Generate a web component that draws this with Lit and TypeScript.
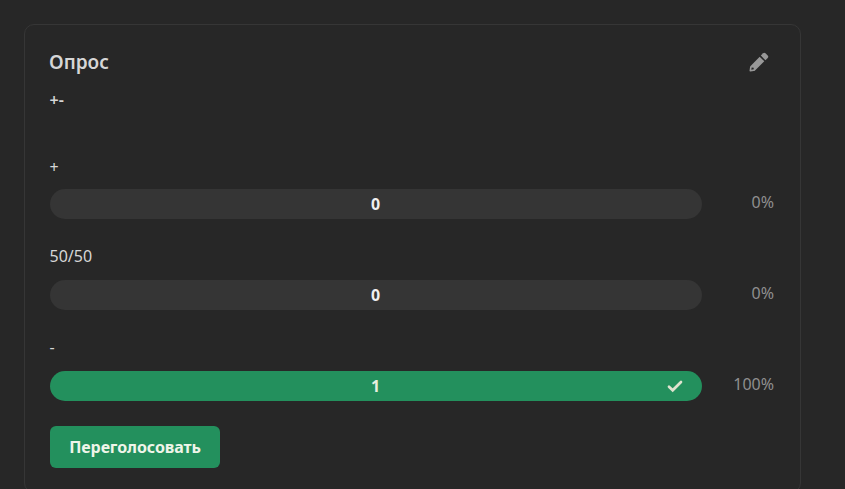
import { LitElement, html, css } from "lit";
import { customElement } from "lit/decorators.js";

interface Option {
  label: string;
  votes: number;
  percent: number;
  chosen: boolean;
}

@customElement("app-root")
class AppRoot extends LitElement {
  static styles = css`
    :host {
      display: block;
      height: 489px;
      overflow: hidden;
      box-sizing: border-box;
      padding: 24px 44px 0 24px;
      background: #272727;
      color: #d6d6d6;
      font: 400 16px/24px "Noto Sans", "Open Sans", sans-serif;
    }
    .card {
      box-sizing: border-box;
      height: 469px;
      padding: 25px;
      border: 1px solid #363636;
      border-radius: 10px;
    }
    .head {
      display: flex;
      justify-content: space-between;
      height: 24px;
    }
    .title {
      margin: 0 0 0 -1px;
      font-size: 19px;
      line-height: 24px;
      font-weight: 600;
    }
    .edit {
      width: 20px;
      height: 20px;
      margin: 2px 6px 0 0;
      fill: #989898;
    }
    .question {
      margin: 14px 0 43px -0.5px;
      font-weight: 600;
    }
    .options {
      display: grid;
      gap: 25px;
    }
    .label {
      margin: 0 0 12px -0.5px;
    }
    .option:first-child .label {
      margin-bottom: 10px;
    }
    .row {
      display: flex;
      align-items: center;
      justify-content: space-between;
      height: 30px;
    }
    .bar {
      display: grid;
      grid-template-columns: 1fr auto 1fr;
      align-items: center;
      width: 652px;
      height: 30px;
      border-radius: 15px;
      background: #353535;
      color: #f0f0f0;
      font-weight: 700;
    }
    .bar.chosen {
      background: #23905d;
      color: #e6efdf;
    }
    .votes {
      grid-column: 2;
      margin-right: 1px;
    }
    .check {
      justify-self: end;
      width: 16px;
      height: 14px;
      margin-right: 19px;
      fill: none;
      stroke: #dfe3cf;
      stroke-width: 2.7;
      stroke-linecap: round;
      stroke-linejoin: miter;
    }
    .percent {
      color: #8f8f8f;
      padding: 0 1px 4px 0;
    }
    .revote {
      display: block;
      width: 170px;
      height: 42px;
      margin-top: 25px;
      padding: 0;
      border: 0;
      border-radius: 6px;
      background: #23905d;
      color: #eff5e9;
      font: inherit;
      font-weight: 700;
      letter-spacing: -0.1px;
    }
  `;

  private options: Option[] = [
    { label: "+", votes: 0, percent: 0, chosen: false },
    { label: "50/50", votes: 0, percent: 0, chosen: false },
    { label: "-", votes: 1, percent: 100, chosen: true },
  ];

  render() {
    return html`
      <section class="card">
        <header class="head">
          <h2 class="title">Опрос</h2>
          <svg class="edit" viewBox="0 0 20 20">
            <path
              fill-rule="evenodd"
              d="M10.7 4.7 15.3 9.3 6 18.5Q5.5 19 4.8 19.1L1.4 19.6Q.4 19.7.5 18.7L1 15.2Q1.1 14.5 1.6 14ZM2.7 15.5 2.3 17.8 4.8 17.3 4.6 15.7Z"
            />
            <path d="M11.8 3.6 14.1 1.3Q15.3.2 16.5 1.3L18.7 3.5Q19.8 4.7 18.7 5.9L16.4 8.2Z" />
          </svg>
        </header>
        <div class="question">+-</div>
        <div class="options">
          ${this.options.map(
            (o) => html`
              <div class="option">
                <div class="label">${o.label}</div>
                <div class="row">
                  <div class="bar ${o.chosen ? "chosen" : ""}">
                    <span class="votes">${o.votes}</span>
                    ${o.chosen
                      ? html`<svg class="check" viewBox="0 0 16 14">
                          <path d="M2 7.8 5.7 11.3 14 3" />
                        </svg>`
                      : null}
                  </div>
                  <span class="percent">${o.percent}%</span>
                </div>
              </div>
            `
          )}
        </div>
        <button class="revote">Переголосовать</button>
      </section>
    `;
  }
}
